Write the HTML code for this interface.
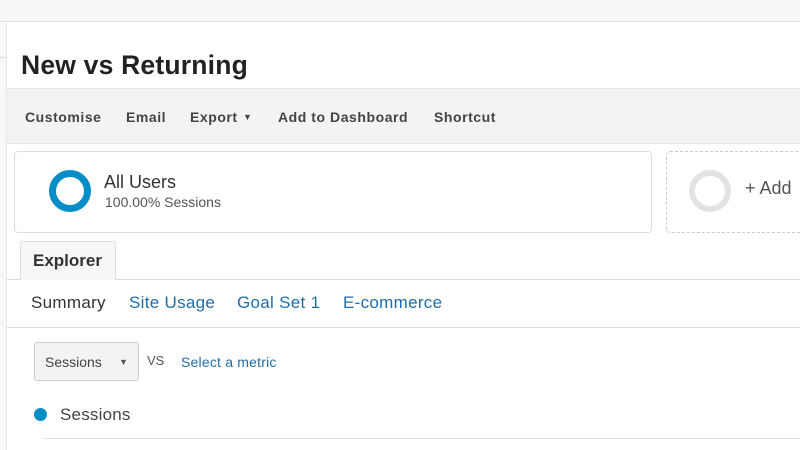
<!DOCTYPE html>
<html><head><style>
*{margin:0;padding:0;box-sizing:border-box}
body{width:800px;height:450px;overflow:hidden;background:#fff;font-family:"Liberation Sans",Arial,sans-serif;position:relative}
.a{position:absolute}
</style></head><body>
<div class="a" style="left:0;top:0;width:800px;height:22px;background:#f7f7f7;border-bottom:1px solid #e0e0e0"></div>
<div class="a" style="left:0;top:23px;width:7px;height:427px;background:#f7f7f7;border-right:1px solid #e6e6e6"></div>
<div class="a" style="left:0;top:57px;width:7px;height:1px;background:#ddd"></div>
<div class="a" style="left:21px;top:50px;font-size:26.5px;font-weight:bold;color:#222;letter-spacing:0.2px">New vs Returning</div>
<div class="a" style="left:7px;top:88px;width:793px;height:56px;background:#f3f3f3;border-top:1px solid #e3e3e3;border-bottom:1px solid #e3e3e3"></div>
<div class="a" style="left:25px;top:109px;font-size:14px;font-weight:bold;color:#444;letter-spacing:0.55px;white-space:nowrap">
<span class="a" style="left:0">Customise</span><span class="a" style="left:101px">Email</span><span class="a" style="left:165px">Export</span><span class="a" style="left:218px;font-size:9px;top:3px">▼</span><span class="a" style="left:253px">Add to Dashboard</span><span class="a" style="left:409px">Shortcut</span></div>
<div class="a" style="left:14px;top:151px;width:638px;height:82px;border:1px solid #ddd;border-radius:4px"></div>
<div class="a" style="left:49px;top:170px;width:42px;height:42px;border:7px solid #058dc7;border-radius:50%"></div>
<div class="a" style="left:104px;top:172px;font-size:18px;color:#333">All Users</div>
<div class="a" style="left:105px;top:194px;font-size:14px;color:#555">100.00% Sessions</div>
<div class="a" style="left:666px;top:151px;width:150px;height:82px;border:1px dashed #ccc;border-radius:4px"></div>
<div class="a" style="left:689px;top:170px;width:42px;height:42px;border:6px solid #e3e3e3;border-radius:50%"></div>
<div class="a" style="left:745px;top:178px;font-size:18px;color:#555">+ Add</div>
<div class="a" style="left:7px;top:279px;width:793px;height:1px;background:#ddd"></div>
<div class="a" style="left:20px;top:241px;width:96px;height:39px;background:#f7f7f7;border:1px solid #ddd;border-bottom:none;border-radius:3px 3px 0 0"></div>
<div class="a" style="left:33px;top:251px;font-size:17px;font-weight:bold;color:#333">Explorer</div>
<div class="a" style="left:31px;top:293px;font-size:17px;color:#333;letter-spacing:0.3px;white-space:nowrap">
<span class="a" style="left:0">Summary</span><span class="a" style="left:98px;color:#1f6ea8">Site Usage</span><span class="a" style="left:206px;color:#1f6ea8">Goal Set 1</span><span class="a" style="left:312px;color:#1f6ea8">E-commerce</span></div>
<div class="a" style="left:7px;top:327px;width:793px;height:1px;background:#ddd"></div>
<div class="a" style="left:34px;top:342px;width:105px;height:39px;background:#f3f3f3;border:1px solid #ccc;border-radius:3px"></div>
<div class="a" style="left:45px;top:354px;font-size:14px;color:#444">Sessions</div>
<div class="a" style="left:119px;top:357px;font-size:9px;color:#555">▼</div>
<div class="a" style="left:147px;top:353px;font-size:13px;color:#555">VS</div>
<div class="a" style="left:181px;top:354px;font-size:14px;color:#1f6ea8;letter-spacing:0.2px">Select a metric</div>
<div class="a" style="left:34px;top:408px;width:13px;height:13px;border-radius:50%;background:#058dc7"></div>
<div class="a" style="left:60px;top:405px;font-size:17px;color:#444;letter-spacing:0.2px">Sessions</div>
<div class="a" style="left:43px;top:438px;width:757px;height:1px;background:#e3e3e3"></div>
</body></html>
